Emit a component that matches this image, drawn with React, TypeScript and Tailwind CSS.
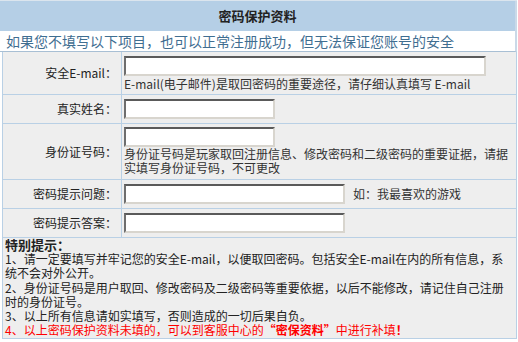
// Password protection info form — header, intro line, fields, notes
export default function App() {
  const font = { fontFamily: '"Noto Sans CJK SC", "Noto Sans", sans-serif' }
  const inputCls =
    'h-[20px] bg-white border-2 border-t-[#5a5a5a] border-l-[#6e6e6e] border-r-[#d8d5ce] border-b-[#d8d5ce] outline-none'
  const labelCls = 'w-[119px] shrink-0 border-r border-[#b9d0e5] flex items-center justify-end pr-[4px]'

  return (
    <div className="w-[518px] h-[342px] bg-white text-[#222] overflow-hidden" style={font}>
      {/* Header + intro */}
      <div className="w-[517px] border-t border-[#dbe5ee]">
        <div className="h-[30px] bg-[#b5cfe6] border-r-2 border-[#cad9e8] flex items-center justify-center text-[13px] font-bold text-[#222]">
          密码保护资料
        </div>
        <div className="h-[21px] bg-white border-r-2 border-[#cad9e8] border-b border-b-[#a8bfd4] pl-[6px] text-[14px] leading-[20px] text-[#3f6e91] whitespace-nowrap">
          如果您不填写以下项目，也可以正常注册成功，但无法保证您账号的安全
        </div>
      </div>

      {/* Form */}
      <div className="ml-[2px] w-[515px] bg-[#eeeeee] border-l border-r border-b border-[#b9d0e5] text-[12px]">
        {/* Email */}
        <div className="flex h-[43px] border-b border-[#b9d0e5]">
          <div className={labelCls}>安全E-mail：</div>
          <div className="flex-1 min-w-0 pl-[2px] pt-[4px]">
            <input className={`${inputCls} w-[362px] block`} />
            <div className="mt-[1px] leading-[14px] whitespace-nowrap text-[#333]">
              E-mail(电子邮件)是取回密码的重要途径，请仔细认真填写 E-mail
            </div>
          </div>
        </div>

        {/* Real name */}
        <div className="flex h-[29px] border-b border-[#b9d0e5]">
          <div className={labelCls}>真实姓名：</div>
          <div className="flex-1 min-w-0 pl-[2px] flex items-center">
            <input className={`${inputCls} w-[151px]`} />
          </div>
        </div>

        {/* ID number */}
        <div className="flex h-[56px] border-b border-[#b9d0e5]">
          <div className={labelCls}>身份证号码：</div>
          <div className="flex-1 min-w-0 pl-[2px] pt-[3px]">
            <input className={`${inputCls} w-[151px] block`} />
            <div className="leading-[14px] whitespace-nowrap text-[#333]">
              身份证号码是玩家取回注册信息、修改密码和二级密码的重要证据，请据
              <br />
              实填写身份证号码，不可更改
            </div>
          </div>
        </div>

        {/* Question */}
        <div className="flex h-[29px] border-b border-[#b9d0e5]">
          <div className={labelCls}>密码提示问题：</div>
          <div className="flex-1 min-w-0 pl-[2px] flex items-center">
            <input className={`${inputCls} w-[221px]`} />
            <span className="ml-[8px] text-[#333]">如：我最喜欢的游戏</span>
          </div>
        </div>

        {/* Answer */}
        <div className="flex h-[29px] border-b border-[#b9d0e5]">
          <div className={labelCls}>密码提示答案：</div>
          <div className="flex-1 min-w-0 pl-[2px] flex items-center">
            <input className={`${inputCls} w-[221px]`} />
          </div>
        </div>

        {/* Notes */}
        <div className="h-[100px] pl-[2px] leading-[14.2px] whitespace-nowrap text-[#222]">
          <div className="font-bold text-[13px]">特别提示：</div>
          <div>
            1、请一定要填写并牢记您的安全E-mail，以便取回密码。包括安全E-mail在内的所有信息，系
            <br />
            统不会对外公开。
          </div>
          <div>
            2、身份证号码是用户取回、修改密码及二级密码等重要依据，以后不能修改，请记住自己注册
            <br />
            时的身份证号。
          </div>
          <div>3、以上所有信息请如实填写，否则造成的一切后果自负。</div>
          <div className="text-[#ff0000]">
            4、以上密码保护资料未填的，可以到客服中心的<b>“密保资料”</b>中进行补填<b>！</b>
          </div>
        </div>
      </div>
    </div>
  )
}
